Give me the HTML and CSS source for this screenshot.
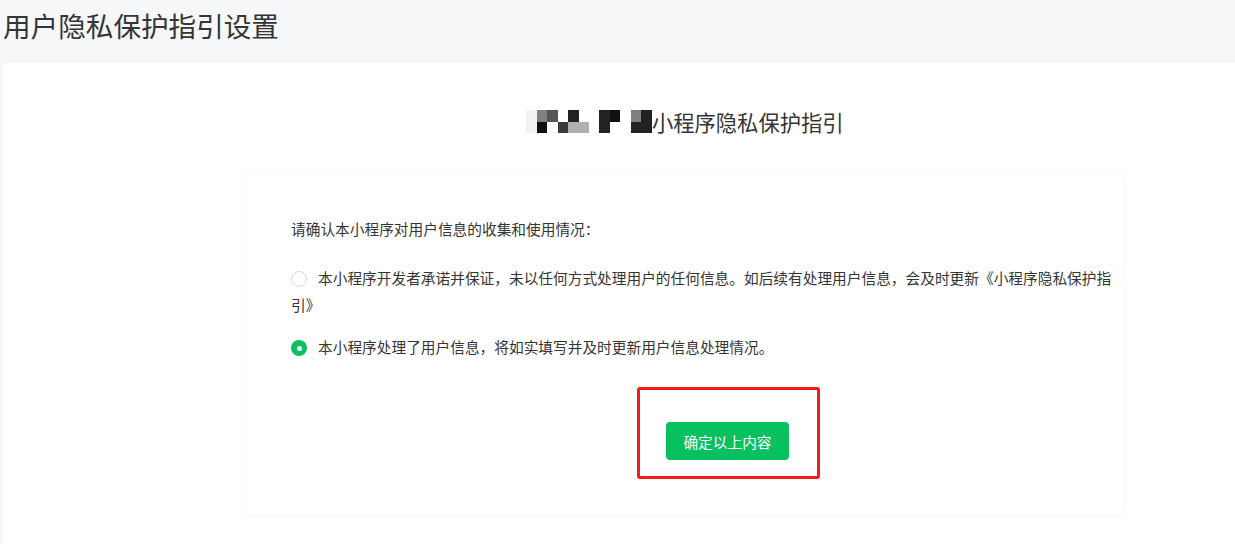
FILE: index.html
```html
<!DOCTYPE html>
<html>
<head>
  <meta charset="utf-8">
  <title>用户隐私保护指引设置</title>
  <link rel="stylesheet" href="styles.css">
</head>
<body>

<h1 class="page-title">用户隐私保护指引设置</h1>

<div class="panel">
  <h2 class="guide-title">
    <span class="mosaic">
      <span class="row">
        <i class="c1"></i><i class="c4"></i><i class="c5"></i><i class="c0"></i><i class="c8"></i><i class="c0"></i><i class="gap"></i><i class="c8"></i><i class="c9"></i><i class="c0"></i><i class="c4"></i><i class="c8"></i>
      </span>
      <span class="row">
        <i class="c1"></i><i class="c9"></i><i class="c0"></i><i class="c7"></i><i class="c3"></i><i class="c3"></i><i class="gap"></i><i class="c8"></i><i class="c0"></i><i class="c0"></i><i class="c8"></i><i class="c8"></i>
      </span>
    </span>小程序隐私保护指引
  </h2>

  <div class="card">
    <p class="intro">请确认本小程序对用户信息的收集和使用情况：</p>

    <label class="option">
      <span class="radio"></span>本小程序开发者承诺并保证，未以任何方式处理用户的任何信息。如后续有处理用户信息，会及时更新《小程序隐私保护指引》
    </label>

    <label class="option">
      <span class="radio checked"></span>本小程序处理了用户信息，将如实填写并及时更新用户信息处理情况。
    </label>

    <button class="confirm-btn">确定以上内容</button>

    <div class="mark-box"></div>
  </div>
</div>

</body>
</html>
```

FILE: styles.css
```css
html, body { overflow: hidden; }
body { margin: 0; background: #f6f7f9; font-family: "Noto Sans CJK SC", "Noto Sans", sans-serif; color: #353535; }
.page-title { margin: 0 0 13px; padding-left: 3px; font-size: 27.6px; line-height: 50px; font-weight: normal; color: #353535; }
.panel { margin-left: 3px; width: 1364px; min-height: 481px; background: #fff; padding-top: 39px; box-sizing: border-box; }
.guide-title { margin: 0; height: 40px; text-align: center; font-size: 21.3px; line-height: 40px; font-weight: normal; color: #353535; }
.mosaic { display: inline-flex; flex-direction: column; vertical-align: top; margin-top: 8px; }
.mosaic .row { display: flex; }
.mosaic i { display: block; width: 10.5px; height: 11.5px; }
.mosaic .gap { width: 10px; }
.mosaic .c0 { background: #fff; }
.mosaic .c1 { background: #f2f2f2; }
.mosaic .c3 { background: #b0b0b0; }
.mosaic .c4 { background: #808080; }
.mosaic .c5 { background: #555; }
.mosaic .c7 { background: #3a3a3a; }
.mosaic .c8 { background: #222; }
.mosaic .c9 { background: #111; }
.card { position: relative; width: 876px; margin: 33px auto 0; padding: 40px 4px 54px 44px; box-sizing: border-box; border-radius: 4px; box-shadow: 0 0 10px rgba(0, 0, 0, 0.05); font-size: 14.7px; line-height: 27px; }
.intro { margin: 0 0 22px; }
.option { display: block; margin-bottom: 15px; cursor: pointer; }
.radio { display: inline-block; width: 16px; height: 16px; margin-right: 11px; border: 1px solid #dcdcdc; border-radius: 50%; box-sizing: border-box; vertical-align: -3px; }
.radio.checked { border: none; background: #07c160; position: relative; }
.radio.checked::after { content: ""; position: absolute; left: 5.5px; top: 5.5px; width: 5px; height: 5px; border-radius: 50%; background: #fff; }
.confirm-btn { display: block; margin: 62px 0 0 375px; width: 123px; height: 38px; border: none; border-radius: 4px; background: #07c160; color: #fff; font-family: inherit; font-size: 14.7px; cursor: pointer; }
.mark-box { position: absolute; left: 390px; top: 212px; width: 183px; height: 92px; border: 3px solid #f41b1b; border-radius: 3px; box-sizing: border-box; }
```
